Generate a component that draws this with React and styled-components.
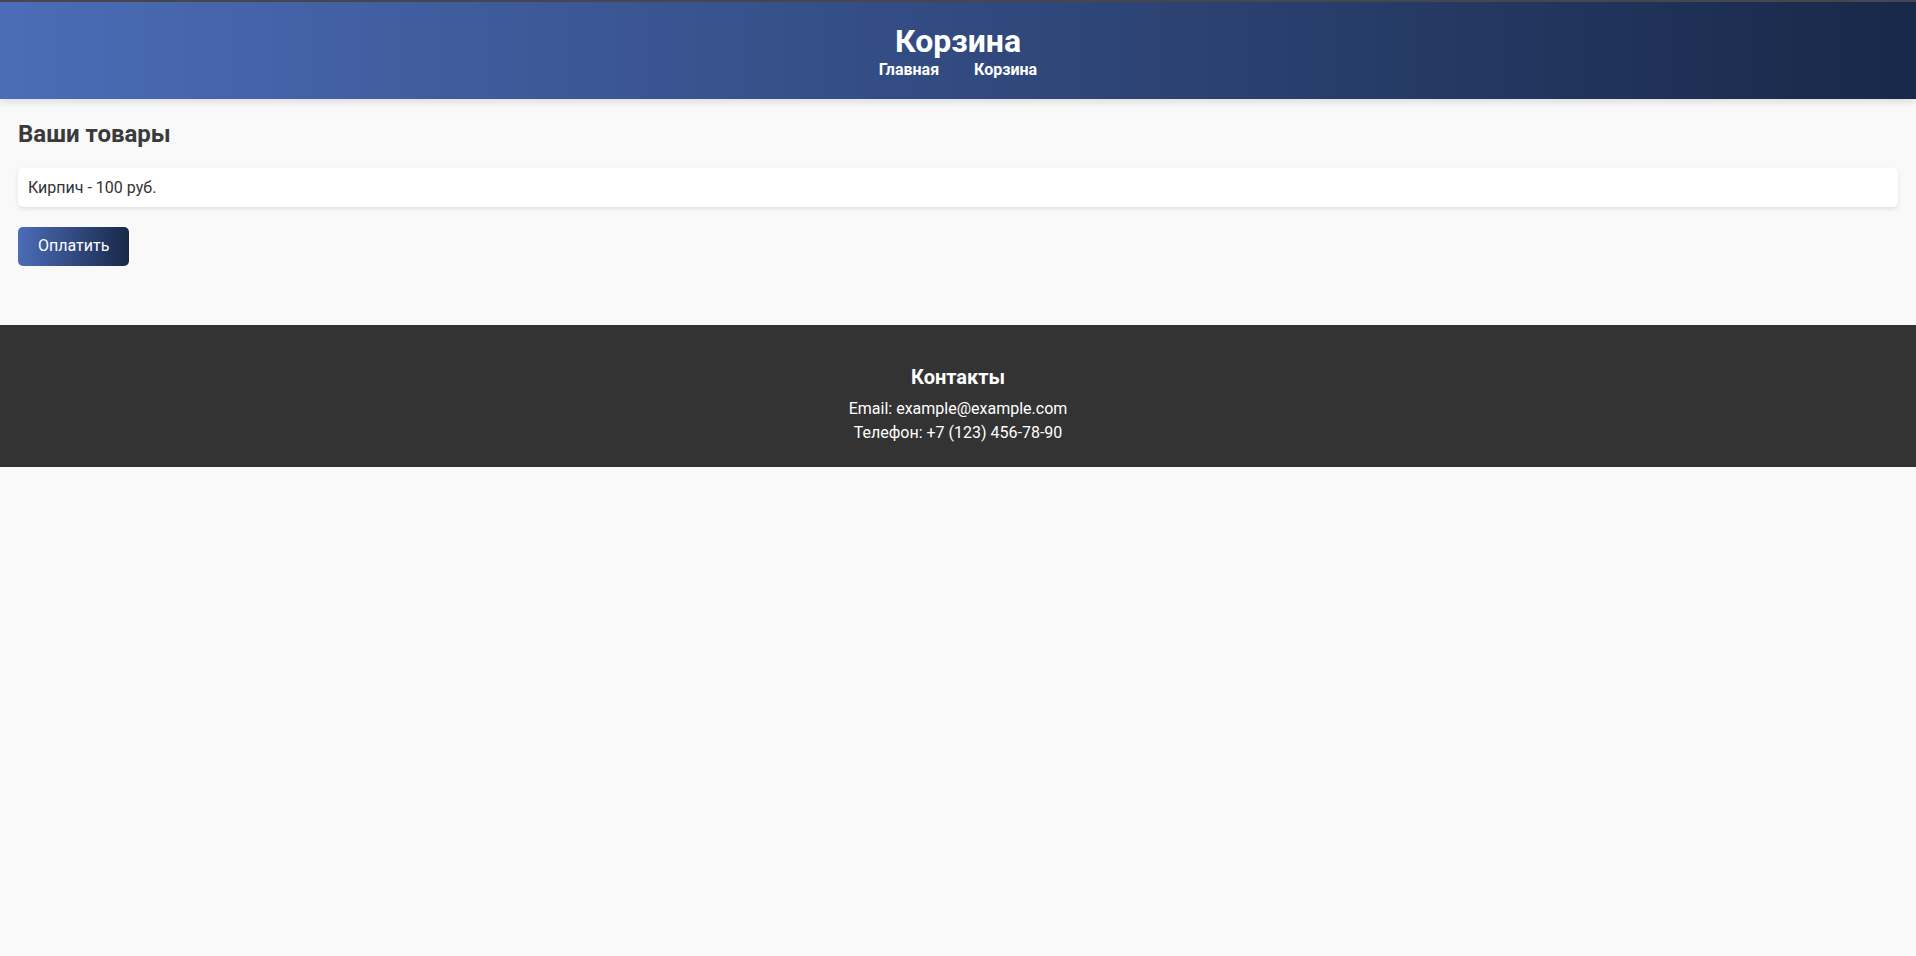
import React from "react";
import styled, { createGlobalStyle } from "styled-components";

const GlobalStyle = createGlobalStyle`
  html, body {
    margin: 0;
    padding: 0;
    background: #f9f9f9;
    font-family: Roboto, "Liberation Sans", Arial, sans-serif;
    color: #333;
  }
`;

const cart = [{ id: 1, name: "Кирпич", price: 100 }];

function App() {
  return (
    <>
      <GlobalStyle />
      <Header>
        <HeaderTitle>Корзина</HeaderTitle>
        <Nav>
          <NavLink href="#">Главная</NavLink>
          <NavLink href="#">Корзина</NavLink>
        </Nav>
      </Header>

      <Main>
        <SectionTitle>Ваши товары</SectionTitle>
        <CartList>
          {cart.map((item) => (
            <CartItem key={item.id}>
              {item.name} - {item.price} руб.
            </CartItem>
          ))}
        </CartList>
        <PayButton>Оплатить</PayButton>
      </Main>

      <Footer>
        <FooterTitle>Контакты</FooterTitle>
        <FooterLine>Email: example@example.com</FooterLine>
        <FooterLine>Телефон: +7 (123) 456-78-90</FooterLine>
      </Footer>
    </>
  );
}

export default App;

const Header = styled.header`
  background: linear-gradient(to right, #4b6cb7, #182848);
  border-top: 2px solid #45464f;
  padding: 20px 0;
  text-align: center;
  color: #fff;
  box-shadow: 0 3px 8px rgba(0, 0, 0, 0.12);
  position: relative;
`;

const HeaderTitle = styled.h1`
  margin: 0;
  font-size: 32px;
  font-weight: 700;
`;

const Nav = styled.nav`
  display: flex;
  justify-content: center;
  gap: 35px;
`;

const NavLink = styled.a`
  color: #fff;
  text-decoration: none;
  font-weight: 700;
  font-size: 16px;
`;

const Main = styled.main`
  padding: 21px 18px 19px;
`;

const SectionTitle = styled.h2`
  margin: 0 0 20px;
  font-size: 24px;
  font-weight: 700;
  color: #3a3a3a;
`;

const CartList = styled.div`
  display: flex;
  flex-direction: column;
  gap: 10px;
  margin-bottom: 20px;
`;

const CartItem = styled.div`
  background: #fff;
  padding: 10px;
  border-radius: 5px;
  box-shadow: 0 2px 4px rgba(0, 0, 0, 0.1);
  font-size: 16px;
  color: #333;
`;

const PayButton = styled.button`
  background: linear-gradient(to right, #4b6cb7, #182848);
  color: #fff;
  border: none;
  border-radius: 5px;
  padding: 10px 20px;
  font-family: Roboto, "Liberation Sans", Arial, sans-serif;
  font-size: 16px;
  line-height: 18.75px;
  cursor: pointer;
  display: block;
`;

const Footer = styled.footer`
  margin-top: 40px;
  background: #333;
  color: #fff;
  text-align: center;
  padding: 20px 0;
`;

const FooterTitle = styled.h3`
  margin: 20px 0 10px;
  font-size: 20px;
  font-weight: 700;
`;

const FooterLine = styled.p`
  margin: 5px 0;
  font-size: 16px;
`;
